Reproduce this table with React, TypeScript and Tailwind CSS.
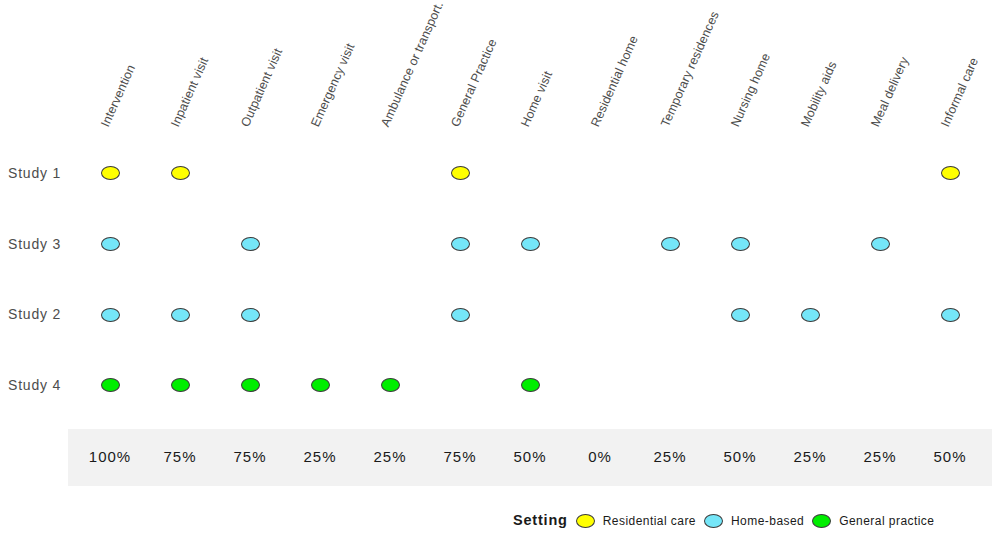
const columns = [
  "Intervention",
  "Inpatient visit",
  "Outpatient visit",
  "Emergency visit",
  "Ambulance or transport.",
  "General Practice",
  "Home visit",
  "Residential home",
  "Temporary residences",
  "Nursing home",
  "Mobility aids",
  "Meal delivery",
  "Informal care",
];

type Setting = "res" | "home" | "gp";

const dotColor: Record<Setting, string> = {
  res: "bg-[#ffff00]",
  home: "bg-[#75e6f8]",
  gp: "bg-[#00ee00]",
};

const rows: { name: string; setting: Setting; cols: number[] }[] = [
  { name: "Study 1", setting: "res", cols: [0, 1, 5, 12] },
  { name: "Study 3", setting: "home", cols: [0, 2, 5, 6, 8, 9, 11] },
  { name: "Study 2", setting: "home", cols: [0, 1, 2, 5, 9, 10, 12] },
  { name: "Study 4", setting: "gp", cols: [0, 1, 2, 3, 4, 6] },
];

const shares = ["100%", "75%", "75%", "25%", "25%", "75%", "50%", "0%", "25%", "50%", "25%", "25%", "50%"];

function Dot({ setting }: { setting: Setting }) {
  return <span className={`block w-[19px] h-[14px] rounded-[50%] border border-[#3a3a3a] ${dotColor[setting]}`} />;
}

export default function App() {
  return (
    <div className="w-[1000px] h-[535px] bg-white overflow-hidden font-['Liberation_Sans',Arial,sans-serif]">
      {/* rotated column headers */}
      <div className="grid grid-cols-[75px_repeat(13,70px)] h-[138px]">
        <div />
        {columns.map((c) => (
          <div key={c} className="flex items-end pl-[36px] pb-[9px]">
            <span className="block w-0 whitespace-nowrap origin-bottom-left -rotate-[66deg] text-[12.5px] leading-[14px] tracking-[0.1px] text-[#4d4d4d]">
              {c}
            </span>
          </div>
        ))}
      </div>

      {/* study rows */}
      <div className="flex flex-col">
        {rows.map((r) => (
          <div key={r.name} className="grid grid-cols-[75px_repeat(13,70px)] h-[70.7px] items-center">
            <span className="pl-[8px] text-[14px] tracking-[0.8px] text-[#4d4d4d]">{r.name}</span>
            {columns.map((c, i) => (
              <div key={c} className="flex justify-center">
                {r.cols.includes(i) && <Dot setting={r.setting} />}
              </div>
            ))}
          </div>
        ))}
      </div>

      {/* share band */}
      <div className="mt-[8px] ml-[68px] w-[924px] h-[57px] bg-[#f2f2f2] px-[7px] grid grid-cols-[repeat(13,70px)] items-center">
        {shares.map((s, i) => (
          <span key={i} className="text-center text-[15px] tracking-[1px] text-[#1a1a1a]">
            {s}
          </span>
        ))}
      </div>

      {/* legend */}
      <div className="mt-[24px] flex items-center pl-[513px] text-[12px] tracking-[0.45px] text-[#1a1a1a]">
        <span className="font-bold text-[14.5px] tracking-[0.8px] mr-[8px]">Setting</span>
        <Dot setting="res" />
        <span className="ml-[8px] mr-[8px]">Residential care</span>
        <Dot setting="home" />
        <span className="ml-[8px] mr-[8px]">Home-based</span>
        <Dot setting="gp" />
        <span className="ml-[8px]">General practice</span>
      </div>
    </div>
  );
}
